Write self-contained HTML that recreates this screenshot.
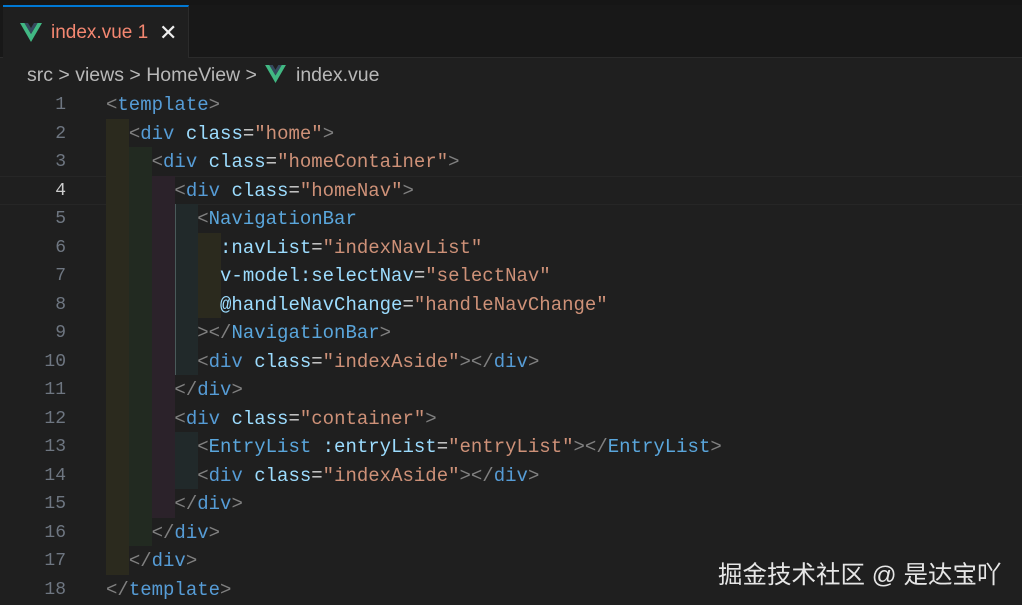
<!DOCTYPE html>
<html><head><meta charset="utf-8"><style>
*{margin:0;padding:0;box-sizing:border-box}
body{width:1022px;height:605px;background:#1f1f1f;overflow:hidden;position:relative;font-family:"Liberation Sans",sans-serif}
.top{position:absolute;left:0;top:0;width:1022px;height:5px;background:#161616}
.tabbar{position:absolute;left:0;top:5px;width:1022px;height:53px;background:#181818;border-bottom:1px solid #2b2b2b}
.tab{position:absolute;left:3px;top:0;width:186px;height:53px;background:#1f1f1f;border-top:2px solid #0078d4;border-right:1px solid #2b2b2b}
.tab .name{position:absolute;left:48px;top:15px;color:#f48771;font-size:19px}
.tab .x{position:absolute;left:156px;top:13px;color:#eee;font-size:22px}
.crumb{position:absolute;left:27px;top:64px;color:#b8b8b8;font-size:19.5px;white-space:pre}
.band{position:absolute;width:23px}
.ln{position:absolute;left:0;width:66px;text-align:right;color:#6e7681;font-family:"Liberation Mono",monospace;font-size:18px}
.code{position:absolute;left:106px;font-family:"Liberation Mono",monospace;font-size:19px;white-space:pre;color:#d4d4d4}
.p{color:#808080}.t{color:#569cd6}.c{color:#5aa6dc}.a{color:#9cdcfe}.s{color:#ce9178}
.wm{position:absolute;left:718px;top:556px;color:#e6e6e6;font-size:24.5px;font-family:"Liberation Sans","Noto Sans CJK SC",sans-serif}
</style></head><body>
<div class="top"></div>
<div class="tabbar"><div class="tab">
<svg style="position:absolute;left:17px;top:16px" width="22" height="19" viewBox="0 0 22 19"><path d="M0 0h4.5L11 11 17.5 0H22L11 19z" fill="#41b883"/><path d="M4.5 0h3.5L11 5 14 0h3.5L11 11z" fill="#35495e"/></svg>
<span class="name">index.vue 1</span><span class="x">✕</span></div></div>
<div class="crumb">src &gt; views &gt; HomeView &gt;</div>
<div class="crumb" style="left:296px">index.vue</div>
<svg style="position:absolute;left:265px;top:65px" width="21" height="18" viewBox="0 0 22 19"><path d="M0 0h4.5L11 11 17.5 0H22L11 19z" fill="#41b883"/><path d="M4.5 0h3.5L11 5 14 0h3.5L11 11z" fill="#35495e"/></svg>
<div style="position:absolute;left:0;top:176px;width:1022px;height:29px;border-top:1px solid #262626;border-bottom:1px solid #262626"></div>
<div class="band" style="left:106px;top:119px;height:456px;background:#2b2a1e"></div>
<div class="band" style="left:129px;top:147px;height:399px;background:#222a21"></div>
<div class="band" style="left:152px;top:176px;height:342px;background:#2b222a"></div>
<div class="band" style="left:175px;top:204px;height:171px;background:#21292a;border-left:1px solid #4a5a5a"></div>
<div class="band" style="left:175px;top:432px;height:57px;background:#21292a"></div>
<div class="band" style="left:198px;top:233px;height:85px;background:#2b2a1e"></div>
<div id="L"></div>
<script>
const lines=[
'<span class="p">&lt;</span><span class="t">template</span><span class="p">&gt;</span>',
'  <span class="p">&lt;</span><span class="t">div</span> <span class="a">class</span>=<span class="s">"home"</span><span class="p">&gt;</span>',
'    <span class="p">&lt;</span><span class="t">div</span> <span class="a">class</span>=<span class="s">"homeContainer"</span><span class="p">&gt;</span>',
'      <span class="p">&lt;</span><span class="t">div</span> <span class="a">class</span>=<span class="s">"homeNav"</span><span class="p">&gt;</span>',
'        <span class="p">&lt;</span><span class="c">NavigationBar</span>',
'          <span class="a">:navList</span>=<span class="s">"indexNavList"</span>',
'          <span class="a">v-model:selectNav</span>=<span class="s">"selectNav"</span>',
'          <span class="a">@handleNavChange</span>=<span class="s">"handleNavChange"</span>',
'        <span class="p">&gt;&lt;/</span><span class="c">NavigationBar</span><span class="p">&gt;</span>',
'        <span class="p">&lt;</span><span class="t">div</span> <span class="a">class</span>=<span class="s">"indexAside"</span><span class="p">&gt;&lt;/</span><span class="t">div</span><span class="p">&gt;</span>',
'      <span class="p">&lt;/</span><span class="t">div</span><span class="p">&gt;</span>',
'      <span class="p">&lt;</span><span class="t">div</span> <span class="a">class</span>=<span class="s">"container"</span><span class="p">&gt;</span>',
'        <span class="p">&lt;</span><span class="c">EntryList</span> <span class="a">:entryList</span>=<span class="s">"entryList"</span><span class="p">&gt;&lt;/</span><span class="c">EntryList</span><span class="p">&gt;</span>',
'        <span class="p">&lt;</span><span class="t">div</span> <span class="a">class</span>=<span class="s">"indexAside"</span><span class="p">&gt;&lt;/</span><span class="t">div</span><span class="p">&gt;</span>',
'      <span class="p">&lt;/</span><span class="t">div</span><span class="p">&gt;</span>',
'    <span class="p">&lt;/</span><span class="t">div</span><span class="p">&gt;</span>',
'  <span class="p">&lt;/</span><span class="t">div</span><span class="p">&gt;</span>',
'<span class="p">&lt;/</span><span class="t">template</span><span class="p">&gt;</span>'];
let h='';
lines.forEach((l,i)=>{const top=90+28.5*i;
h+=`<div class="ln" style="top:${top+5}px;${i==3?'color:#ccc':''}">${i+1}</div>`;
h+=`<div class="code" style="top:${top+4}px">${l}</div>`;});
document.getElementById('L').innerHTML=h;
</script>
<div class="wm">掘金技术社区 @ 是达宝吖</div>
</body></html>
